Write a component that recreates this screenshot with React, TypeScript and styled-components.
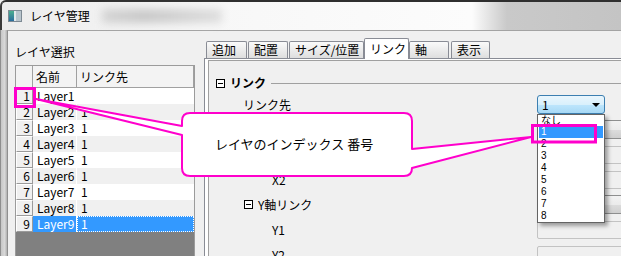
import styled, { createGlobalStyle } from 'styled-components';

const UI_FONT = `"MS UI Gothic", "Noto Sans CJK JP", "Liberation Sans", sans-serif`;
const MAGENTA = '#ff00cc';

const GlobalStyle = createGlobalStyle`
  html, body {
    margin: 0;
    padding: 0;
  }
  body {
    width: 621px;
    height: 256px;
    overflow: hidden;
    font: 12px ${UI_FONT};
    color: #000;
  }
`;

const Window = styled.div`
  position: relative;
  width: 621px;
  height: 256px;
  display: flex;
  flex-direction: column;
  overflow: hidden;
  background: #f0f0f0;
`;

const TitleBar = styled.div`
  height: 28px;
  flex-shrink: 0;
  display: flex;
  align-items: center;
  padding-left: 6px;
  border-top: 2px solid #2f2f2f;
  border-left: 2px solid #3a3a3a;
  border-top-left-radius: 6px;
  background: linear-gradient(
    to right,
    #ececec 0,
    #f7f7f7 200px,
    #fcfcfc 470px,
    #c9c9c9 505px,
    #c4c4c4 100%
  );
`;

const TitleText = styled.span`
  margin-left: 8px;
  font-size: 12px;
  line-height: 14px;
`;

const Smudge = styled.div`
  margin-left: 12px;
  width: 120px;
  height: 14px;
  background: linear-gradient(to right, #d4d4d4, #c8c8c8 35%, #d2d2d2 65%, #dedede);
  filter: blur(4px);
`;

const BodyRow = styled.div`
  flex: 1;
  display: flex;
  min-height: 0;
`;

const Frame = styled.div`
  width: 7px;
  flex-shrink: 0;
  background: linear-gradient(
    to right,
    #8e8e8e 0,
    #8e8e8e 1px,
    #c6c6c6 1px,
    #dadada 5px,
    #b8b8b8 6px
  );
`;

const Client = styled.div`
  flex: 1;
  min-width: 0;
  display: flex;
  border-top: 1px solid #a3a3a3;
  border-left: 1px solid #8f8f8f;
  background: #f0f0f0;
`;

const LeftPane = styled.div`
  width: 196px;
  flex-shrink: 0;
  box-sizing: border-box;
  display: flex;
  flex-direction: column;
  padding: 14px 9px 0 7px;
`;

const PaneLabel = styled.div`
  line-height: 14px;
  margin-bottom: 6px;
`;

const LayerGrid = styled.div`
  flex: 1;
  display: grid;
  grid-template-columns: 17px 44px 1fr;
  grid-auto-rows: min-content;
  align-content: start;
  border: 1px solid #9b9b9b;
  border-bottom: none;
  background: #808080;
`;

const HeadCell = styled.div`
  box-sizing: border-box;
  height: 22px;
  line-height: 21px;
  padding-left: 3px;
  background: #f3f3f3;
  border-right: 1px solid #a0a0a0;
  border-bottom: 1px solid #a0a0a0;
`;

const RowHead = styled.div`
  box-sizing: border-box;
  height: 16px;
  line-height: 14px;
  text-align: right;
  padding-right: 2px;
  background: #f0f0f0;
  border-top: 1px solid #fff;
  border-left: 1px solid #fff;
  border-right: 1px solid #9a9a9a;
  border-bottom: 1px solid #9a9a9a;
`;

const DataCell = styled.div<{ $alt?: boolean; $selected?: boolean; $focus?: boolean; $sep?: boolean }>`
  box-sizing: border-box;
  height: 16px;
  line-height: 16px;
  padding-left: 4px;
  white-space: nowrap;
  background: ${(p) => (p.$selected ? '#3399ff' : p.$alt ? '#f0f0f0' : '#fff')};
  color: ${(p) => (p.$selected ? '#fff' : '#000')};
  border-right: ${(p) => (p.$sep ? '1px solid #fff' : 'none')};
  outline: ${(p) => (p.$focus ? '1px dotted #fff' : 'none')};
  outline-offset: -1px;
`;

const RightPane = styled.div`
  flex: 1;
  min-width: 0;
  display: flex;
  flex-direction: column;
  padding-top: 7px;
`;

const TabBar = styled.div`
  height: 20px;
  flex-shrink: 0;
  display: flex;
  align-items: flex-end;
  padding-left: 2px;
  position: relative;
  z-index: 1;
`;

const Tab = styled.div<{ $w: number; $mr: number; $active?: boolean }>`
  box-sizing: border-box;
  flex-shrink: 0;
  width: ${(p) => p.$w}px;
  margin-right: ${(p) => p.$mr}px;
  height: ${(p) => (p.$active ? 21 : 17)}px;
  margin-bottom: ${(p) => (p.$active ? -1 : 0)}px;
  padding-left: 5px;
  line-height: ${(p) => (p.$active ? 19 : 16)}px;
  white-space: nowrap;
  border: 1px solid #898c95;
  border-bottom: none;
  border-radius: 2px 2px 0 0;
  background: ${(p) =>
    p.$active ? '#fff' : 'linear-gradient(#fafafa 0%, #ececec 50%, #dedede 100%)'};
`;

const TabPage = styled.div`
  flex: 1;
  display: flex;
  padding: 1px 0 0 3px;
  border-top: 1px solid #898c95;
  border-left: 1px solid #898c95;
  background: #fff;
`;

const PropGrid = styled.div`
  flex: 1;
  padding-top: 13px;
  border-top: 1px solid #a0a0a0;
  border-left: 1px solid #a0a0a0;
  background: #f0f0f0;
`;

const CategoryHeader = styled.div`
  height: 18px;
  display: flex;
  align-items: center;
  padding-left: 7px;
`;

const ToggleBox = styled.span`
  position: relative;
  box-sizing: border-box;
  width: 9px;
  height: 9px;
  flex-shrink: 0;
  border: 1px solid #000;
  background: #fff;

  &::after {
    content: '';
    position: absolute;
    left: 1px;
    right: 1px;
    top: 3px;
    height: 1px;
    background: #000;
  }
`;

const CategoryTitle = styled.span`
  margin-left: 5px;
  font-weight: bold;
  line-height: 14px;
`;

const CategoryRule = styled.span`
  flex: 1;
  height: 1px;
  margin-left: 5px;
  background: #a0a0a0;
`;

const PropRow = styled.div`
  display: grid;
  grid-template-columns: 328px 1fr;
  align-items: center;
  height: 25px;
`;

const PropLabel = styled.div<{ $indent: number }>`
  display: flex;
  align-items: center;
  gap: 5px;
  padding-left: ${(p) => p.$indent}px;
  line-height: 14px;
  white-space: nowrap;
`;

const ComboFocused = styled.div`
  box-sizing: border-box;
  width: 68px;
  height: 19px;
  display: flex;
  align-items: center;
  justify-content: space-between;
  padding: 0 4px 0 4px;
  border: 1px solid #3c7fb1;
  border-radius: 3px;
  background: linear-gradient(#eaf6fd 0%, #d9f0fc 50%, #bee6fd 50%, #a7d9f5 100%);
`;

const DropArrow = styled.span`
  width: 0;
  height: 0;
  border-left: 4px solid transparent;
  border-right: 4px solid transparent;
  border-top: 4px solid #000;
`;

const ComboPlain = styled.div`
  box-sizing: border-box;
  width: 110px;
  height: 19px;
  border: 1px solid #8e8f8f;
  border-radius: 3px;
  background: linear-gradient(#f2f2f2 0%, #ebebeb 50%, #dddddd 50%, #cfcfcf 100%);
`;

const TextBox = styled.div`
  box-sizing: border-box;
  width: 110px;
  height: 18px;
  border: 1px solid #c3c3c3;
  border-radius: 2px;
  background: #f0f0f0;
`;

const DropList = styled.div`
  position: absolute;
  left: 537px;
  top: 114px;
  width: 68px;
  height: 109px;
  box-sizing: border-box;
  overflow: hidden;
  border: 1px solid #646464;
  background: #fff;
  box-shadow: 3px 3px 4px rgba(0, 0, 0, 0.35);
  z-index: 5;
  font: 10px "Liberation Sans Narrow", "Liberation Sans", "Noto Sans CJK JP", sans-serif;
`;

const ListItem = styled.div<{ $selected?: boolean }>`
  height: 12px;
  line-height: 12px;
  margin: 0 1px;
  padding-left: 2px;
  background: ${(p) => (p.$selected ? '#3399ff' : 'transparent')};
  color: ${(p) => (p.$selected ? '#fff' : '#000')};

  &:first-child {
    height: 11px;
    line-height: 11px;
  }
`;

const Annotation = styled.svg`
  position: absolute;
  left: 0;
  top: 0;
  z-index: 10;
  pointer-events: none;
`;

const CalloutText = styled.div`
  position: absolute;
  left: 215px;
  top: 136px;
  z-index: 11;
  font-size: 13px;
  line-height: 16px;
  white-space: nowrap;
`;

function WindowIcon() {
  return (
    <svg width="14" height="12" viewBox="0 0 14 12">
      <defs>
        <linearGradient id="ic" x1="0" y1="0" x2="0" y2="1">
          <stop offset="0" stopColor="#4cae8f" />
          <stop offset="1" stopColor="#2b6d9e" />
        </linearGradient>
      </defs>
      <rect x="0.5" y="0.5" width="13" height="11" fill="#e4e9ec" stroke="#7d8a94" />
      <rect x="1" y="1" width="5" height="10" fill="url(#ic)" />
      <rect x="8" y="1" width="5" height="10" fill="#b9c5cd" />
    </svg>
  );
}

const layers = Array.from({ length: 9 }, (_, i) => ({
  no: i + 1,
  name: `Layer${i + 1}`,
  link: i === 0 ? '' : '1',
}));

const tabs = [
  { label: '追加', w: 41, mr: 1 },
  { label: '配置', w: 40, mr: 1 },
  { label: 'サイズ/位置', w: 75, mr: 0 },
  { label: 'リンク', w: 45, mr: 0, active: true },
  { label: '軸', w: 40, mr: 2 },
  { label: '表示', w: 39, mr: 0 },
];

const listItems = ['なし', '1', '2', '3', '4', '5', '6', '7', '8'];

export default function App() {
  return (
    <>
      <GlobalStyle />
      <Window>
        <TitleBar>
          <WindowIcon />
          <TitleText>レイヤ管理</TitleText>
          <Smudge />
        </TitleBar>
        <BodyRow>
          <Frame />
          <Client>
            <LeftPane>
              <PaneLabel>レイヤ選択</PaneLabel>
              <LayerGrid>
                <HeadCell />
                <HeadCell>名前</HeadCell>
                <HeadCell>リンク先</HeadCell>
                {layers.map((l, i) => {
                  const selected = l.no === 9;
                  const alt = i % 2 === 1;
                  return [
                    <RowHead key={`h${l.no}`}>{l.no}</RowHead>,
                    <DataCell key={`n${l.no}`} $alt={alt} $selected={selected} $sep>
                      {l.name}
                    </DataCell>,
                    <DataCell key={`l${l.no}`} $alt={alt} $selected={selected} $focus={selected}>
                      {l.link}
                    </DataCell>,
                  ];
                })}
              </LayerGrid>
            </LeftPane>
            <RightPane>
              <TabBar>
                {tabs.map((t) => (
                  <Tab key={t.label} $w={t.w} $mr={t.mr} $active={t.active}>
                    {t.label}
                  </Tab>
                ))}
              </TabBar>
              <TabPage>
                <PropGrid>
                  <CategoryHeader>
                    <ToggleBox />
                    <CategoryTitle>リンク</CategoryTitle>
                    <CategoryRule />
                  </CategoryHeader>
                  <PropRow>
                    <PropLabel $indent={34}>リンク先</PropLabel>
                    <ComboFocused>
                      <span>1</span>
                      <DropArrow />
                    </ComboFocused>
                  </PropRow>
                  {/* rows hidden under the callout: labels not visible */}
                  <PropRow>
                    <PropLabel $indent={35}>
                      <ToggleBox />
                    </PropLabel>
                    <ComboPlain />
                  </PropRow>
                  <PropRow>
                    <PropLabel $indent={63} />
                    <TextBox />
                  </PropRow>
                  <PropRow>
                    <PropLabel $indent={63}>X2</PropLabel>
                    <TextBox />
                  </PropRow>
                  <PropRow>
                    <PropLabel $indent={35}>
                      <ToggleBox />
                      Y軸リンク
                    </PropLabel>
                    <ComboPlain />
                  </PropRow>
                  <PropRow>
                    <PropLabel $indent={63}>Y1</PropLabel>
                    <TextBox />
                  </PropRow>
                  <PropRow>
                    <PropLabel $indent={63}>Y2</PropLabel>
                    <TextBox />
                  </PropRow>
                </PropGrid>
              </TabPage>
            </RightPane>
          </Client>
        </BodyRow>

        <DropList>
          {listItems.map((it) => (
            <ListItem key={it} $selected={it === '1'}>
              {it}
            </ListItem>
          ))}
        </DropList>

        <Annotation width="621" height="256" viewBox="0 0 621 256">
          <path
            d="M190 113 H404 Q412 113 412 121 V149 L531 137 L412 168 Q412 176 404 176 H190 Q182 176 182 168 V135 L36 99 L182 126 V121 Q182 113 190 113 Z"
            fill="#fff"
            stroke={MAGENTA}
            strokeWidth="2"
            strokeLinejoin="round"
          />
          <rect x="15.5" y="88.5" width="19" height="18" fill="none" stroke={MAGENTA} strokeWidth="3" />
          <rect x="532.5" y="125.5" width="63" height="16.5" fill="none" stroke={MAGENTA} strokeWidth="3" />
        </Annotation>
        <CalloutText>レイヤのインデックス 番号</CalloutText>
      </Window>
    </>
  );
}
